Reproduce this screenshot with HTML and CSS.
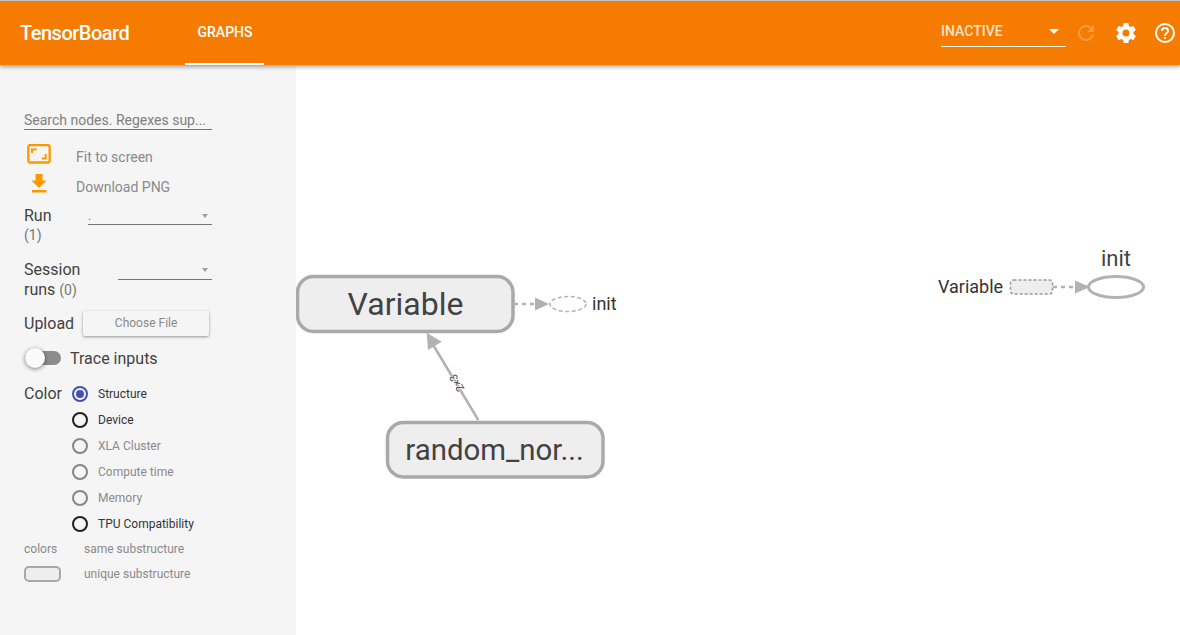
FILE: index.html
```html
<!DOCTYPE html>
<html>
<head>
    <meta charset="utf-8" />
    <title>TensorBoard</title>
    <link rel="stylesheet" href="styles.css">
</head>
<body>
    <div class="toolbar">
        <div class="brand">TensorBoard</div>
        <div class="tab">GRAPHS</div>
        <div class="toolbar_right">
            <div class="run_state">
                <span>INACTIVE</span>
                <i class="caret_white"></i>
            </div>
            <svg class="top_icon reload" viewBox="0 0 24 24"><path d="M17.65 6.35A7.96 7.96 0 0 0 12 4a8 8 0 1 0 7.73 10h-2.08A6 6 0 1 1 12 6c1.66 0 3.14.69 4.22 1.78L13 11h7V4l-2.35 2.35z"/></svg>
            <svg class="top_icon gear" viewBox="0 0 24 24"><path d="M19.43 12.98c.04-.32.07-.64.07-.98s-.03-.66-.07-.98l2.11-1.65c.19-.15.24-.42.12-.64l-2-3.46c-.12-.22-.39-.3-.61-.22l-2.49 1c-.52-.4-1.08-.73-1.69-.98l-.38-2.65A.49.49 0 0 0 14 2h-4c-.25 0-.46.18-.49.42l-.38 2.65c-.61.25-1.17.59-1.69.98l-2.49-1c-.23-.09-.49 0-.61.22l-2 3.46c-.13.22-.07.49.12.64l2.11 1.65c-.04.32-.07.65-.07.98s.03.66.07.98l-2.11 1.65c-.19.15-.24.42-.12.64l2 3.46c.12.22.39.3.61.22l2.49-1c.52.4 1.08.73 1.69.98l.38 2.65c.03.24.24.42.49.42h4c.25 0 .46-.18.49-.42l.38-2.65c.61-.25 1.17-.59 1.69-.98l2.49 1c.23.09.49 0 .61-.22l2-3.46c.12-.22.07-.49-.12-.64l-2.11-1.65zM12 15.5a3.5 3.5 0 1 1 0-7 3.5 3.5 0 0 1 0 7z"/></svg>
            <svg class="top_icon help" viewBox="0 0 24 24"><path d="M11 18h2v-2h-2v2zm1-16a10 10 0 1 0 0 20 10 10 0 0 0 0-20zm0 18a8 8 0 1 1 0-16 8 8 0 0 1 0 16zm0-14a4 4 0 0 0-4 4h2c0-1.1.9-2 2-2s2 .9 2 2c0 2-3 1.75-3 5h2c0-2.25 3-2.5 3-5a4 4 0 0 0-4-4z"/></svg>
        </div>
    </div>

    <div class="main">
        <div class="sidebar">
            <div class="search">Search nodes. Regexes sup...</div>

            <div class="action_row fit_row">
                <svg class="action_icon" viewBox="0 0 26 20"><rect x="2.300" y="1" width="21.400" height="17.500" rx="2" fill="none" stroke="#ff9800" stroke-width="2.300"/><path d="M5 9V4.500h5.700v2H7V9zM20.700 10v5.500H15.700v-2h3V10z" fill="#ff9800"/></svg>
                <span>Fit to screen</span>
            </div>
            <div class="action_row download_row">
                <svg class="action_icon" viewBox="0 0 26 20"><path d="M9.500 0h7v6.500h4L13 14 5.500 6.500h4zM6 16h14.500v2.500H6z" fill="#ff9800"/></svg>
                <span>Download PNG</span>
            </div>

            <div class="select_row run_row">
                <div class="select_label">Run<div class="count">(1)</div></div>
                <div class="select_box run_select"><span>.</span><i class="caret"></i></div>
            </div>
            <div class="select_row session_row">
                <div class="select_label">Session<div>runs <span class="count">(0)</span></div></div>
                <div class="select_box session_select"><i class="caret"></i></div>
            </div>

            <div class="upload_row">
                <span>Upload</span>
                <div class="file_btn">Choose File</div>
            </div>

            <div class="trace_row">
                <div class="toggle"><i class="toggle_knob"></i></div>
                <span>Trace inputs</span>
            </div>

            <div class="color_row">
                <div class="color_label">Color</div>
                <div class="radio_list">
                    <div class="radio_item"><i class="radio checked"></i><span>Structure</span></div>
                    <div class="radio_item"><i class="radio on"></i><span>Device</span></div>
                    <div class="radio_item off"><i class="radio"></i><span>XLA Cluster</span></div>
                    <div class="radio_item off"><i class="radio"></i><span>Compute time</span></div>
                    <div class="radio_item off"><i class="radio"></i><span>Memory</span></div>
                    <div class="radio_item"><i class="radio on"></i><span>TPU Compatibility</span></div>
                </div>
            </div>

            <div class="legend">
                <div class="legend_key">colors</div><div>same substructure</div>
                <div class="legend_key"><i class="swatch"></i></div><div>unique substructure</div>
            </div>
        </div>

        <svg class="graph" viewBox="0 0 884 570">
            <!-- left graph -->
            <line class="edge" x1="182.300" y1="355" x2="136" y2="278"/>
            <polygon class="arrow" points="130.700,267.700 145.700,276.700 132,285"/>
            <text class="edge_label" transform="translate(160.500 318) rotate(-121)" text-anchor="middle" y="4">2×3</text>
            <rect class="node" x="1.500" y="211.500" width="215.500" height="55" rx="16"/>
            <text class="node_text" x="109.500" y="250" text-anchor="middle" font-size="32">Variable</text>
            <rect class="node" x="91.500" y="357.500" width="215.500" height="54.500" rx="16"/>
            <text class="node_text" x="198.500" y="395" text-anchor="middle" font-size="29.400">random_nor...</text>

            <line class="dash_edge" x1="218" y1="239" x2="240" y2="239"/>
            <polygon class="arrow" points="239,232.500 253,239 239,245.500"/>
            <ellipse class="aux_op" cx="272" cy="239" rx="18" ry="7.500"/>
            <text class="aux_text" x="296" y="245" font-size="18">init</text>

            <!-- right graph -->
            <text class="aux_text" x="642" y="228" font-size="18">Variable</text>
            <rect class="aux_var" x="714.500" y="215" width="42" height="14" rx="3"/>
            <line class="dash_edge" x1="757" y1="222" x2="780" y2="222"/>
            <polygon class="arrow" points="779,215.500 794,222 779,228.500"/>
            <ellipse class="init_op" cx="820" cy="222" rx="27.500" ry="10.500"/>
            <text class="init_text" x="820" y="201" text-anchor="middle" font-size="22">init</text>
        </svg>
    </div>
</body>
</html>
```

FILE: styles.css
```css
*{
    padding: 0;
    margin: 0;
    box-sizing: border-box;
}
html, body{
    height: 100%;
    overflow: hidden;
}
body{
    display: flex;
    flex-direction: column;
    border-top: 1px solid #c4c4c4;
    font-family: Roboto, "Liberation Sans", sans-serif;
    background-color: #fff;
}

/* top bar */
.toolbar{
    position: relative;
    z-index: 2;
    display: flex;
    align-items: center;
    flex: none;
    height: 64px;
    padding-left: 20px;
    background-color: #f57c00;
    color: #fff;
    box-shadow: 0 2px 4px rgba(0, 0, 0, 0.35);
}
.brand{
    width: 165px;
    font-size: 20px;
    font-weight: 500;
    letter-spacing: -0.5px;
}
.tab{
    width: 79px;
    height: 64px;
    padding-left: 1px;
    line-height: 62px;
    text-align: center;
    font-size: 14px;
    font-weight: 500;
    border-bottom: 2px solid #fff;
}
.toolbar_right{
    display: flex;
    align-items: center;
    margin-left: auto;
}
.run_state{
    display: flex;
    justify-content: space-between;
    align-items: center;
    width: 125px;
    height: 29px;
    margin-top: -1px;
    padding-right: 7px;
    padding-bottom: 2px;
    border-bottom: 1px solid rgba(255, 255, 255, 0.9);
    font-size: 14px;
    font-weight: 500;
    color: rgba(255, 255, 255, 0.8);
}
.caret_white{
    width: 0;
    height: 0;
    border-left: 5px solid transparent;
    border-right: 5px solid transparent;
    border-top: 5px solid #fff;
}
.top_icon{
    width: 24px;
    height: 24px;
    fill: #fff;
}
.reload{
    margin-left: 8px;
    margin-right: 16px;
    opacity: 0.25;
}
.gear{
    margin-right: 15px;
}
.help{
    margin-right: 3px;
}

/* left panel */
.main{
    display: flex;
    flex: 1;
    min-height: 0;
}
.sidebar{
    flex: none;
    width: 296px;
    padding: 46px 84px 0 24px;
    background-color: #f5f5f5;
    font-size: 16px;
    color: #424242;
}
.search{
    height: 19px;
    line-height: 18px;
    font-size: 14px;
    white-space: nowrap;
    color: #808080;
    border-bottom: 1px solid #757575;
}
.action_row{
    display: flex;
    align-items: center;
    height: 20px;
    font-size: 14px;
    color: #8a8a8a;
}
.action_row span{
    margin-left: 24px;
    padding-top: 6px;
}
.fit_row{
    margin-top: 14px;
}
.download_row{
    margin-top: 10px;
}
.action_icon{
    flex: none;
    width: 26px;
    height: 20px;
    margin-left: 2px;
}
.select_row{
    display: flex;
    justify-content: space-between;
}
.run_row{
    margin-top: 12px;
}
.session_row{
    margin-top: 15px;
}
.select_label{
    line-height: 20px;
}
.run_row .count{
    margin-top: -1px;
}
.count{
    font-size: 14px;
    color: #757575;
}
.select_box{
    position: relative;
    height: 20px;
    padding-top: 3px;
    font-size: 12px;
    color: #757575;
    border-bottom: 1px solid #757575;
}
.run_select{
    width: 124px;
    height: 19px;
}
.session_select{
    width: 94px;
}
.caret{
    position: absolute;
    top: 8px;
    right: 4px;
    border-left: 3.500px solid transparent;
    border-right: 3.500px solid transparent;
    border-top: 4px solid #9e9e9e;
}
.upload_row{
    display: flex;
    align-items: center;
    margin-top: 11px;
}
.file_btn{
    width: 126px;
    height: 25px;
    margin-left: 9px;
    line-height: 25px;
    text-align: center;
    font-size: 12px;
    color: #8a8a8a;
    background-color: #f5f5f5;
    border-radius: 2px;
    box-shadow: 0 1px 3px rgba(0, 0, 0, 0.4);
}
.trace_row{
    display: flex;
    align-items: center;
    margin-top: 10px;
    height: 24px;
}
.toggle{
    position: relative;
    width: 36px;
    height: 14px;
    margin-left: 1px;
    margin-right: 9px;
    border-radius: 7px;
    background-color: #8c8c8c;
}
.toggle_knob{
    position: absolute;
    top: -3px;
    left: 0;
    width: 20px;
    height: 20px;
    border-radius: 50%;
    background-color: #fafafa;
    box-shadow: 0 1px 4px rgba(0, 0, 0, 0.5);
}
.color_row{
    display: flex;
    margin-top: 12px;
}
.color_label{
    width: 48px;
    line-height: 24px;
}
.radio_list{
    margin-top: -1px;
}
.radio_item{
    display: flex;
    align-items: center;
    height: 26px;
    font-size: 12px;
    white-space: nowrap;
    color: #333;
}
.radio_item.off{
    color: #8a8a8a;
}
.radio{
    flex: none;
    position: relative;
    width: 16px;
    height: 16px;
    margin-right: 10px;
    border: 2px solid #858585;
    border-radius: 50%;
}
.radio.on{
    border-color: #212121;
}
.radio.checked{
    border-color: #3f51b5;
}
.radio.checked::after{
    content: "";
    position: absolute;
    top: 2px;
    left: 2px;
    width: 8px;
    height: 8px;
    border-radius: 50%;
    background-color: #3f51b5;
}
.legend{
    display: grid;
    grid-template-columns: 60px auto;
    grid-auto-rows: 25px;
    align-items: center;
    margin-top: -1px;
    font-size: 12px;
    white-space: nowrap;
    color: #8a8a8a;
}
.swatch{
    display: block;
    width: 37px;
    height: 16px;
    border: 2px solid #a8a8a8;
    border-radius: 5px;
    background-color: #eee;
}

/* graph canvas */
.graph{
    flex: 1;
    min-width: 0;
    height: 100%;
    font-family: Roboto, "Liberation Sans", sans-serif;
}
.edge{
    stroke: #b2b2b2;
    stroke-width: 2.500;
}
.arrow{
    fill: #b2b2b2;
}
.edge_label{
    font-size: 11px;
    fill: #444;
    stroke: #fff;
    stroke-width: 1;
    paint-order: stroke;
}
.node{
    fill: #eee;
    stroke: #a9a9a9;
    stroke-width: 3.500;
}
.node_text{
    fill: #424242;
}
.dash_edge{
    stroke: #b2b2b2;
    stroke-width: 2.500;
    stroke-dasharray: 4 4;
}
.aux_op{
    fill: #fff;
    stroke: #b2b2b2;
    stroke-width: 1.500;
    stroke-dasharray: 4 2.500;
}
.aux_var{
    fill: #eee;
    stroke: #9a9a9a;
    stroke-width: 1.500;
    stroke-dasharray: 3 2;
}
.init_op{
    fill: #fff;
    stroke: #b2b2b2;
    stroke-width: 3;
}
.aux_text{
    fill: #333;
}
.init_text{
    fill: #424242;
}
```
